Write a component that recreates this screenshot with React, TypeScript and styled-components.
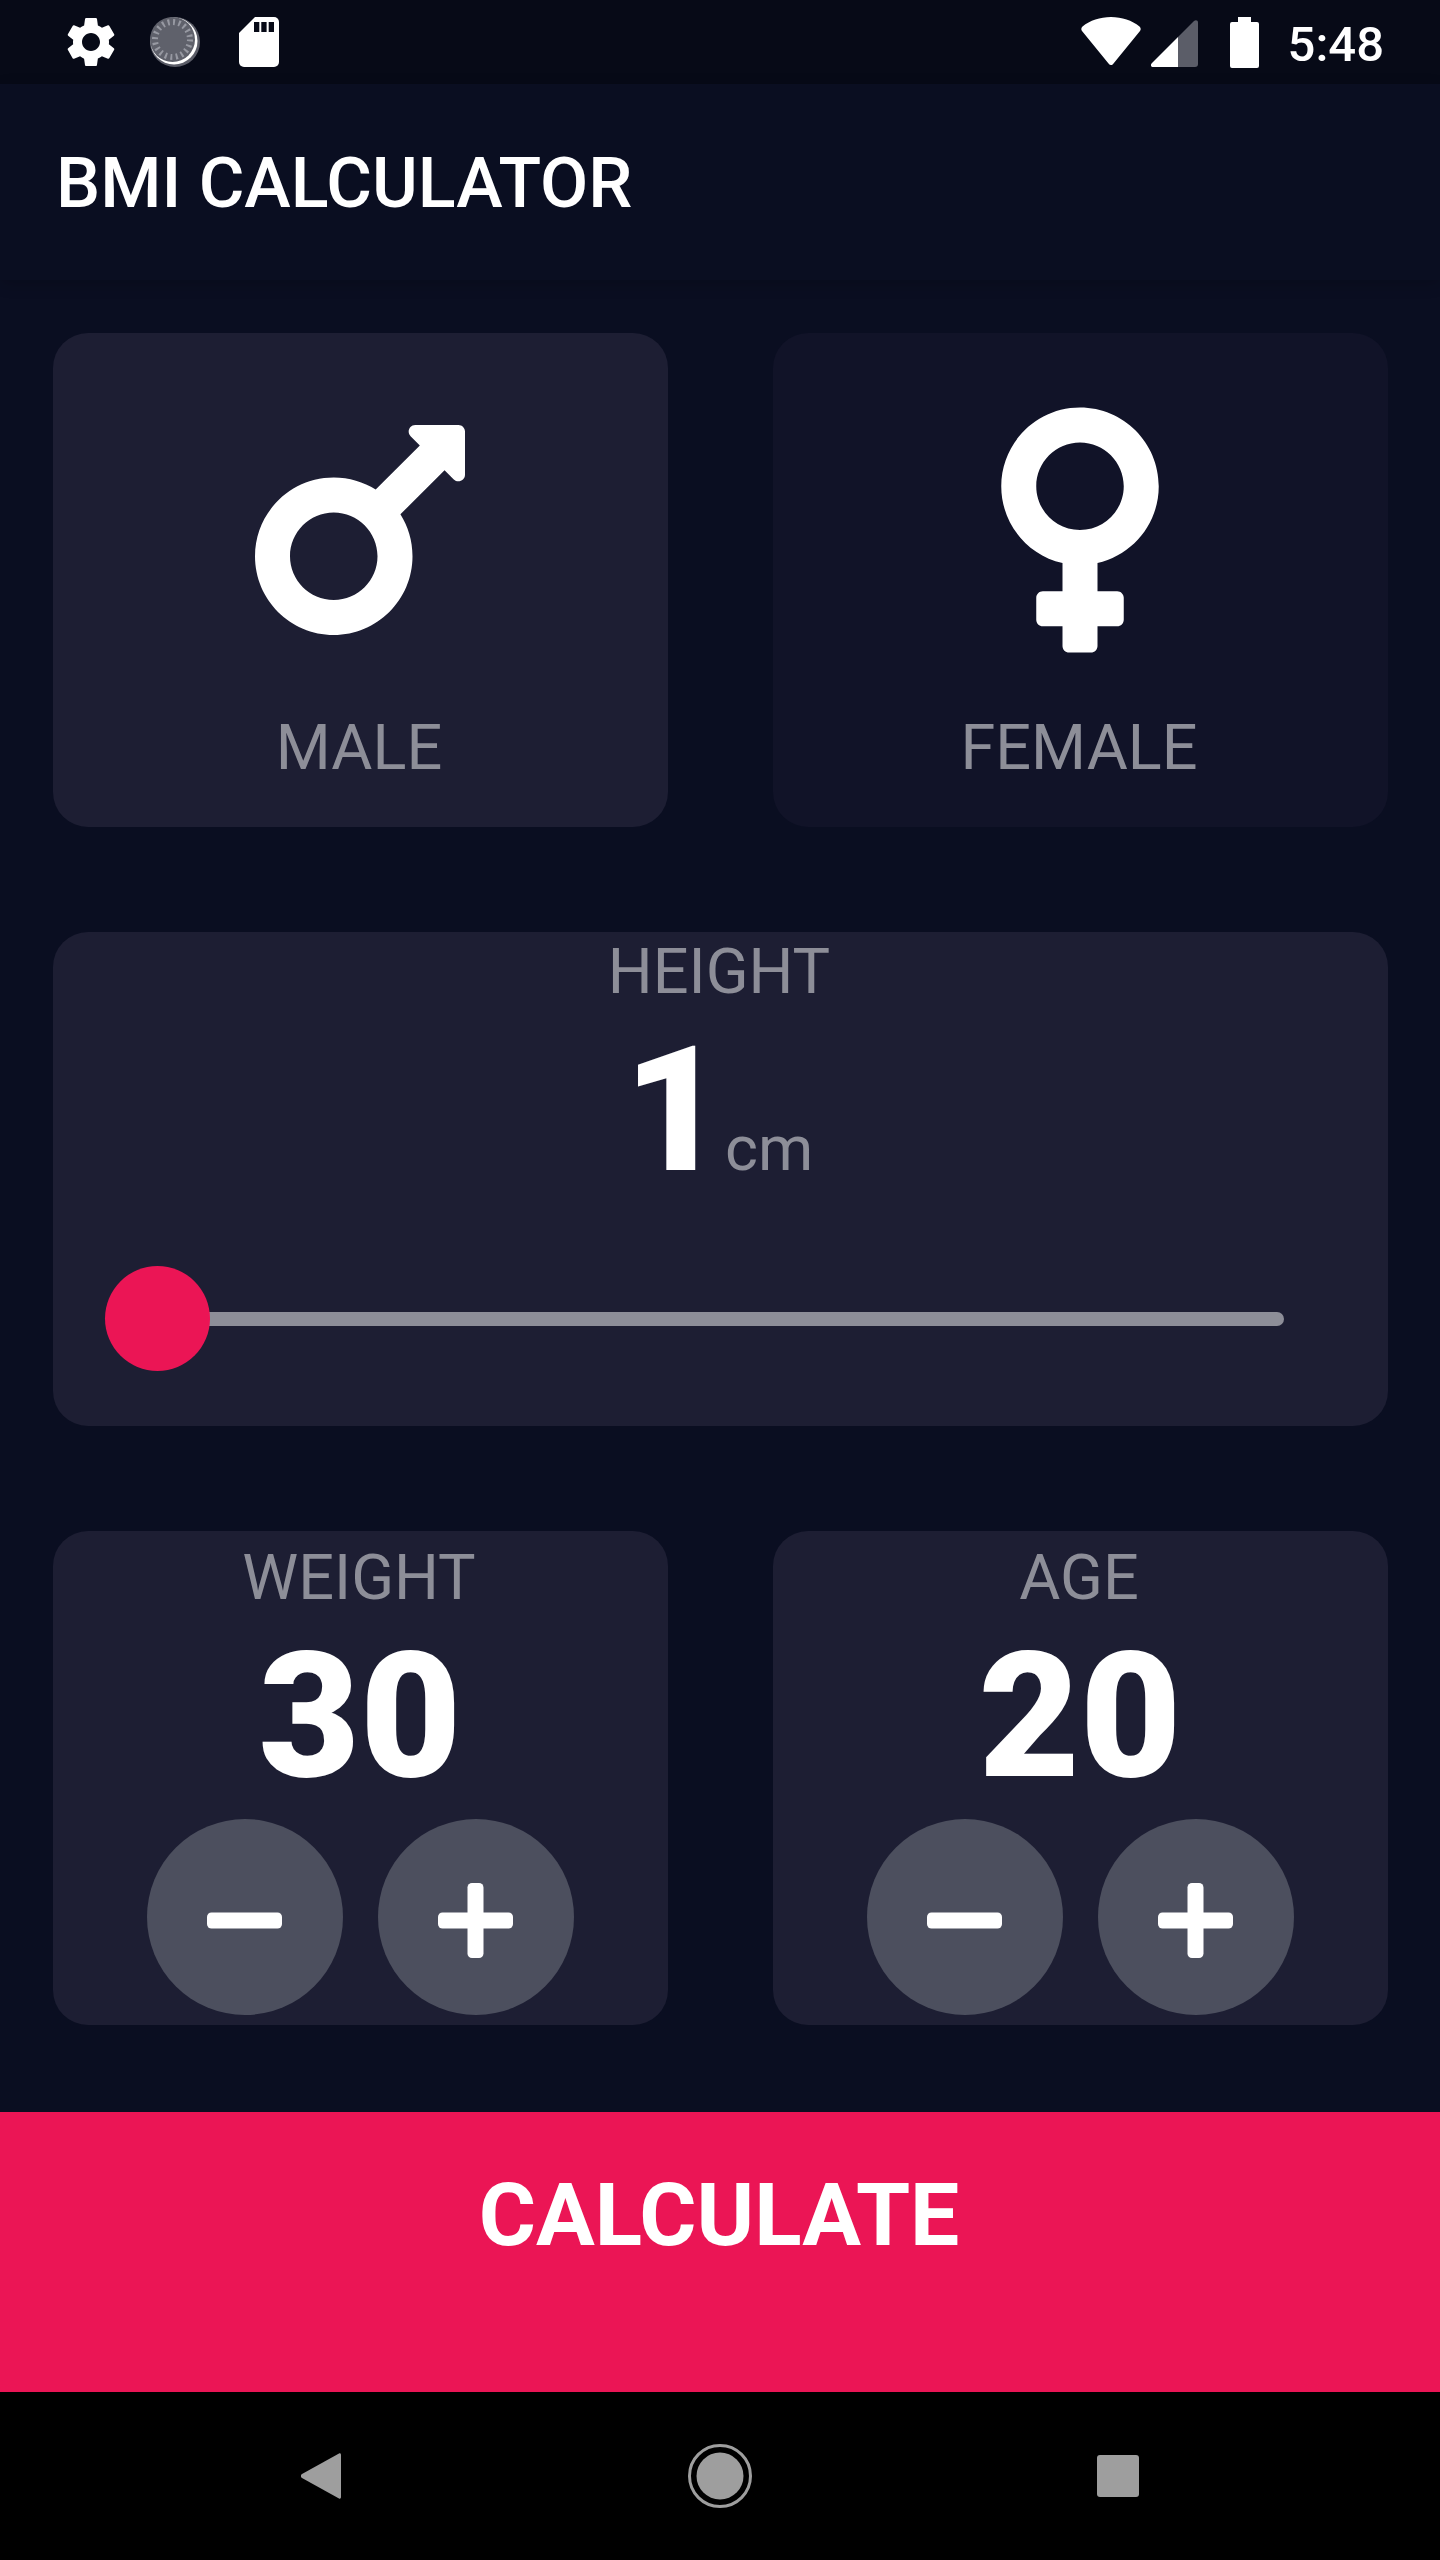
import React from 'react'
import styled, { createGlobalStyle } from 'styled-components'
import { FaMars, FaVenus } from 'react-icons/fa'
import { MdSettings } from 'react-icons/md'

const GlobalStyle = createGlobalStyle`
  html, body {
    margin: 0;
    padding: 0;
    background: #0a0e21;
  }
  * {
    box-sizing: border-box;
  }
`

const Screen = styled.div`
  width: 1440px;
  height: 2560px;
  display: flex;
  flex-direction: column;
  background: #0a0e21;
  font-family: Roboto, 'Liberation Sans', sans-serif;
  color: #fff;
  overflow: hidden;
`

const StatusBar = styled.div`
  height: 84px;
  flex: none;
  display: flex;
  align-items: center;
  justify-content: space-between;
  padding: 0 56px 0 61px;
  background: #070a17;
`

const StatusGroup = styled.div`
  display: flex;
  align-items: center;
`

const StatusIcon = styled.span<{ $left?: number; $top?: number }>`
  display: flex;
  margin-left: ${({ $left }) => $left ?? 0}px;
  margin-top: ${({ $top }) => $top ?? 0}px;
`

const Clock = styled.span`
  font-size: 49px;
  font-weight: 500;
  margin: 4px 0 0 29px;
`

const AppBar = styled.header`
  height: 196px;
  flex: none;
  position: relative;
  z-index: 1;
  display: flex;
  align-items: center;
  padding: 2px 56px 0;
  background: #0a0e21;
  box-shadow: 0 4px 14px rgba(0, 0, 0, 0.18);
`

const Title = styled.h1`
  margin: 0;
  font-size: 70px;
  font-weight: 500;
`

const Main = styled.main`
  flex: 1;
  display: flex;
  flex-direction: column;
  min-height: 0;
`

const Row = styled.section`
  flex: 1;
  display: flex;
  min-height: 0;
`

const Card = styled.div<{ $active?: boolean }>`
  flex: 1;
  margin: 52.5px;
  border-radius: 35px;
  background: ${({ $active }) => ($active ? '#1d1e33' : '#111328')};
  display: flex;
  flex-direction: column;
  align-items: center;
  justify-content: center;
  min-width: 0;
`

const GenderIcon = styled.div`
  height: 280px;
  padding-top: 14px;
  margin-bottom: 52.5px;
  display: flex;
  justify-content: center;

  svg {
    height: 280px;
    width: auto;
    fill: #fff;
    display: block;
  }
`

const Label = styled.div<{ $top?: boolean }>`
  font-size: 63px;
  line-height: ${({ $top }) => ($top ? 75 : 77)}px;
  margin: 0 0 ${({ $top }) => ($top ? -1 : -3)}px -2px;
  color: #8d8e98;
`

const NumberRow = styled.div`
  display: flex;
  align-items: baseline;
  justify-content: center;
  margin-right: 3px;
`

const Value = styled.div`
  font-size: 175px;
  line-height: 205px;
  font-weight: 900;
`

const Unit = styled.span`
  font-size: 63px;
  color: #8d8e98;
`

const Slider = styled.div`
  position: relative;
  align-self: stretch;
  height: 210px;
  flex: none;
  margin-top: 1px;
  display: flex;
  align-items: center;
  padding: 0 104px 0 105px;
`

const Track = styled.div`
  width: 100%;
  height: 14px;
  border-radius: 7px;
  background: #8d8e98;
`

const Thumb = styled.div`
  position: absolute;
  left: 52.5px;
  top: 52.5px;
  width: 105px;
  height: 105px;
  border-radius: 50%;
  background: #eb1555;
`

const Steppers = styled.div`
  display: flex;
  gap: 35px;
`

const RoundButton = styled.button`
  width: 196px;
  height: 196px;
  padding: 0;
  border: none;
  border-radius: 50%;
  background: #4c4f5e;
  display: flex;
  align-items: center;
  justify-content: center;

  svg {
    display: block;
    margin-top: 6px;
  }
`

const CalculateBar = styled.button`
  height: 280px;
  flex: none;
  margin-top: 35px;
  width: 100%;
  padding: 0 2px 74px 0;
  border: none;
  background: #eb1555;
  color: #fff;
  font-family: inherit;
  font-size: 87.5px;
  font-weight: 700;
`

const NavBar = styled.nav`
  height: 168px;
  flex: none;
  background: #000;
  display: flex;
  align-items: center;
  justify-content: center;
`

const NavSlot = styled.div`
  width: 398px;
  display: flex;
  justify-content: center;
`

const MinusIcon = () => (
  <svg width="75" height="75" viewBox="0 0 75 75" fill="#fff">
    <rect x="0" y="29.5" width="75" height="16" rx="4.5" />
  </svg>
)

const PlusIcon = () => (
  <svg width="75" height="75" viewBox="0 0 75 75" fill="#fff">
    <rect x="0" y="29.5" width="75" height="16" rx="4.5" />
    <rect x="29.5" y="0" width="16" height="75" rx="4.5" />
  </svg>
)

const Stepper = ({ label, value }: { label: string; value: number }) => (
  <Card $active>
    <Label $top>{label}</Label>
    <Value>{value}</Value>
    <Steppers>
      <RoundButton aria-label="minus">
        <MinusIcon />
      </RoundButton>
      <RoundButton aria-label="plus">
        <PlusIcon />
      </RoundButton>
    </Steppers>
  </Card>
)

export default function App() {
  return (
    <>
      <GlobalStyle />
      <Screen>
        <StatusBar>
          <StatusGroup>
            <MdSettings size={60} color="#fff" />
            <StatusIcon $left={29}>
              <svg width="50" height="50" viewBox="0 0 50 50">
                <circle cx="25" cy="25" r="25" fill="#5b5d68" />
                <circle cx="24" cy="24" r="23.5" fill="#fff" />
                <circle cx="22.5" cy="22.5" r="22.5" fill="#5f616b" />
                <circle cx="22.5" cy="22.500" r="17.5" fill="none" stroke="#9799a2" strokeWidth="6" strokeDasharray="2 3.5" />
              </svg>
            </StatusIcon>
            <StatusIcon $left={39}>
              <svg width="40" height="50" viewBox="0 0 40 50" fill="#fff">
                <path d="M16 0h19a5 5 0 0 1 5 5v40a5 5 0 0 1-5 5H5a5 5 0 0 1-5-5V16z" />
                <rect x="15" y="5" width="5.300" height="10" fill="#070a17" />
                <rect x="22.300" y="5" width="5.300" height="10" fill="#070a17" />
                <rect x="29.700" y="5" width="5.300" height="10" fill="#070a17" />
              </svg>
            </StatusIcon>
          </StatusGroup>
          <StatusGroup>
            <StatusIcon $top={-2}>
              <svg width="60" height="48" viewBox="0 0 60 48" fill="#fff">
                <path d="M30 0C19 0 9 3.500 1.500 9.500C0 11 0 12.500 1 14L27.500 46.500C29 48.500 31 48.500 32.500 46.500L59 14C60 12.500 60 11 58.500 9.500C51 3.500 41 0 30 0z" />
              </svg>
            </StatusIcon>
            <StatusIcon $left={10} $top={3}>
              <svg width="47" height="47" viewBox="0 0 47 47">
                <path d="M27 17L1 43c-2 2-1 4 1 4h25z" fill="#fff" />
                <path d="M27 17L43 1c2-1.500 4-.5 4 1.500V44a3 3 0 0 1-3 3H27z" fill="#5b5d68" />
              </svg>
            </StatusIcon>
            <StatusIcon $left={32}>
              <svg width="29" height="51" viewBox="0 0 29 51" fill="#fff">
                <path d="M8 0h13v5h6a2 2 0 0 1 2 2v42a2 2 0 0 1-2 2H2a2 2 0 0 1-2-2V7a2 2 0 0 1 2-2h6z" />
              </svg>
            </StatusIcon>
            <Clock>5:48</Clock>
          </StatusGroup>
        </StatusBar>

        <AppBar>
          <Title>BMI CALCULATOR</Title>
        </AppBar>

        <Main>
          <Row>
            <Card $active>
              <GenderIcon>
                <FaMars />
              </GenderIcon>
              <Label>MALE</Label>
            </Card>
            <Card>
              <GenderIcon>
                <FaVenus />
              </GenderIcon>
              <Label>FEMALE</Label>
            </Card>
          </Row>
          <Row>
            <Card $active>
              <Label $top>HEIGHT</Label>
              <NumberRow>
                <Value>1</Value>
                <Unit>cm</Unit>
              </NumberRow>
              <Slider>
                <Track />
                <Thumb />
              </Slider>
            </Card>
          </Row>
          <Row>
            <Stepper label="WEIGHT" value={30} />
            <Stepper label="AGE" value={20} />
          </Row>
        </Main>

        <CalculateBar>CALCULATE</CalculateBar>

        <NavBar>
          <NavSlot>
            <svg width="43" height="46" viewBox="0 0 43 46" fill="#9e9e9e">
              <path d="M38 .5c1-.5 2 0 2 1.500v42c0 1.500-1 2-2 1.500L1 25c-1.500-1-1.500-3 0-4z" />
            </svg>
          </NavSlot>
          <NavSlot>
            <svg width="64" height="64" viewBox="0 0 64 64">
              <circle cx="32" cy="32" r="30.500" fill="none" stroke="#9e9e9e" strokeWidth="3" />
              <circle cx="32" cy="32" r="23.500" fill="#9e9e9e" />
            </svg>
          </NavSlot>
          <NavSlot>
            <svg width="42" height="42" viewBox="0 0 42 42">
              <rect width="42" height="42" rx="3" fill="#9e9e9e" />
            </svg>
          </NavSlot>
        </NavBar>
      </Screen>
    </>
  )
}
